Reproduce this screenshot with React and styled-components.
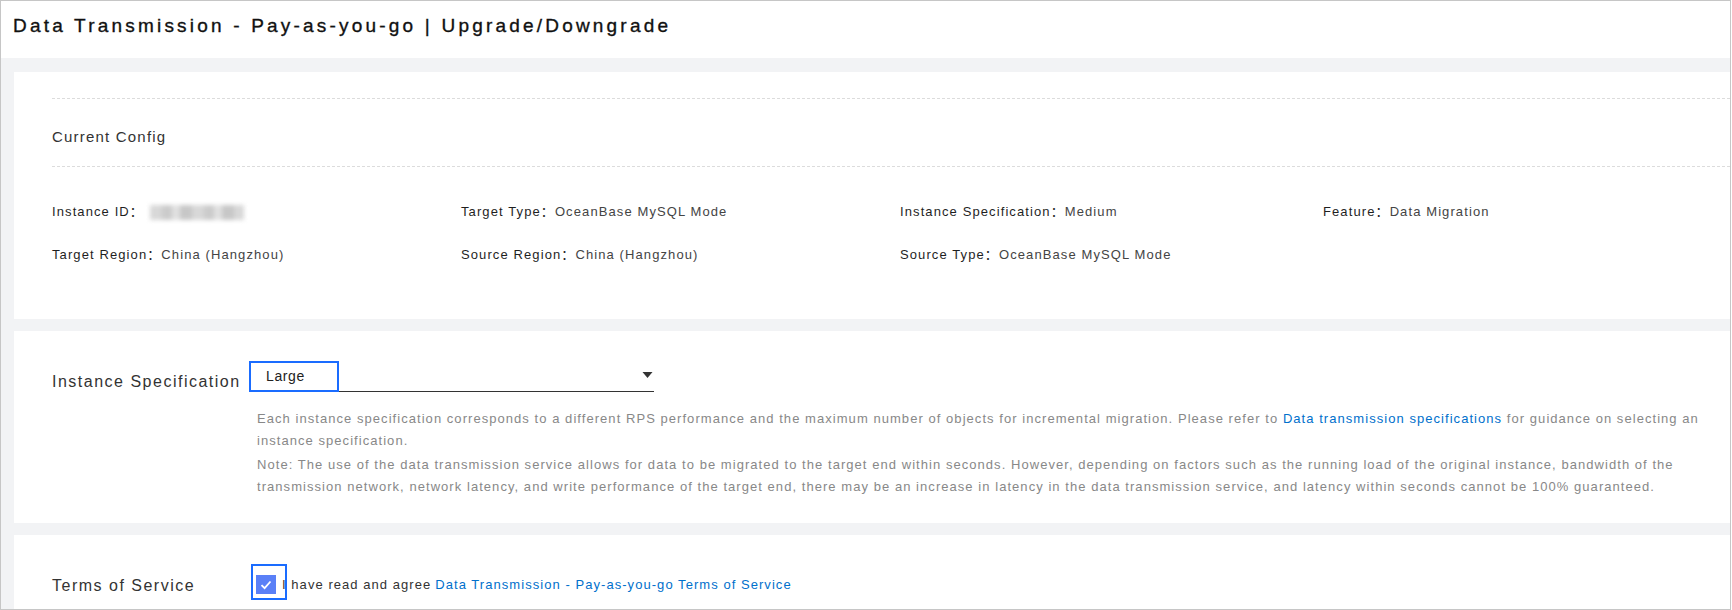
import React from 'react';
import styled, { createGlobalStyle } from 'styled-components';

const GlobalStyle = createGlobalStyle`
  html, body {
    margin: 0;
    padding: 0;
    background: #ffffff;
  }
  body {
    font-family: "Liberation Sans", Arial, "Noto Sans CJK SC", sans-serif;
    color: #333;
  }
`;

const config = [
  { label: 'Instance ID', value: null },
  { label: 'Target Type', value: 'OceanBase MySQL Mode' },
  { label: 'Instance Specification', value: 'Medium' },
  { label: 'Feature', value: 'Data Migration' },
  { label: 'Target Region', value: 'China (Hangzhou)' },
  { label: 'Source Region', value: 'China (Hangzhou)' },
  { label: 'Source Type', value: 'OceanBase MySQL Mode' },
];

const App = () => {
  return (
    <>
      <GlobalStyle />
      <Frame>
        <Header>
          <Title>Data Transmission - Pay-as-you-go | Upgrade/Downgrade</Title>
        </Header>
        <Body>
          <Card $pad="26px 0 54px 38px">
            <ConfigHead>Current Config</ConfigHead>
            <InfoGrid>
              {config.map((item) => (
                <InfoItem key={item.label}>
                  <InfoLabel>{item.label}：</InfoLabel>
                  {item.value ? <InfoValue>{item.value}</InfoValue> : <Blurred />}
                </InfoItem>
              ))}
            </InfoGrid>
          </Card>

          <Card $pad="30px 0 23px 38px">
            <FormRow $align="flex-end">
              <FormLabel>Instance Specification</FormLabel>
              <Select>
                <SelectValue>Large</SelectValue>
                <Caret viewBox="0 0 10 6">
                  <path d="M0 0 L10 0 L5 6 Z" fill="#333" />
                </Caret>
              </Select>
            </FormRow>
            <Help>
              <p>
                Each instance specification corresponds to a different RPS performance and the maximum number of
                objects for incremental migration. Please refer to <Link>Data transmission specifications</Link> for
                guidance on selecting an instance specification.
              </p>
              <p>
                Note: The use of the data transmission service allows for data to be migrated to the target end within
                seconds. However, depending on factors such as the running load of the original instance, bandwidth of
                the transmission network, network latency, and write performance of the target end, there may be an
                increase in latency in the data transmission service, and latency within seconds cannot be 100%
                guaranteed.
              </p>
            </Help>
          </Card>

          <Card $pad="38px 0 40px 38px">
            <FormRow $align="center">
              <FormLabel $shift="3px">Terms of Service</FormLabel>
              <Agree>
                <Checkbox>
                  <svg width="12" height="10" viewBox="0 0 12 10">
                    <path d="M1.5 5.2 L4.6 8.2 L10.5 1.5" fill="none" stroke="#fff" strokeWidth="1.8" />
                  </svg>
                </Checkbox>
                <span>I have read and agree</span>
                <Link>Data Transmission - Pay-as-you-go Terms of Service</Link>
              </Agree>
            </FormRow>
          </Card>
        </Body>
      </Frame>
    </>
  );
};

export default App;

const Frame = styled.div`
  width: 1731px;
  height: 610px;
  box-sizing: border-box;
  border: 1px solid #c6c6c6;
  background: #f2f3f5;
  overflow: hidden;
`;

const Header = styled.div`
  height: 57px;
  background: #fff;
  display: flex;
  align-items: center;
  padding-left: 12px;
  padding-bottom: 7px;
  box-sizing: border-box;
`;

const Title = styled.h1`
  margin: 0;
  font-size: 19px;
  font-weight: normal;
  color: #111;
  letter-spacing: 3.2px;
  -webkit-text-stroke: 0.35px #111;
`;

const Body = styled.div`
  display: flex;
  flex-direction: column;
  gap: 12px;
  padding: 14px 0 0 13px;
`;

const Card = styled.div`
  background: #fff;
  padding: ${(p) => p.$pad};
`;

const ConfigHead = styled.div`
  border-top: 1px dashed #dcdcdc;
  border-bottom: 1px dashed #dcdcdc;
  padding: 28px 0 19px;
  font-size: 15px;
  line-height: 20px;
  letter-spacing: 1.2px;
  color: #333;
`;

const InfoGrid = styled.div`
  display: grid;
  grid-template-columns: 409px 439px 423px 1fr;
  row-gap: 23px;
  margin-top: 35px;
`;

const InfoItem = styled.div`
  display: flex;
  align-items: center;
  font-size: 13px;
  line-height: 20px;
  letter-spacing: 1.1px;
  white-space: nowrap;
`;

const InfoLabel = styled.span`
  color: #1f1f1f;
`;

const InfoValue = styled.span`
  color: #444;
`;

const Blurred = styled.span`
  display: inline-block;
  width: 94px;
  height: 15px;
  margin-left: 6px;
  background: repeating-linear-gradient(
    90deg,
    #d4d4d4 0 12px,
    #c6c6c6 12px 22px,
    #dedede 22px 30px,
    #c2c2c2 30px 42px
  );
  filter: blur(2.2px);
  opacity: 0.9;
`;

const FormRow = styled.div`
  display: flex;
  align-items: ${(p) => p.$align};
`;

const FormLabel = styled.div`
  width: 198px;
  flex-shrink: 0;
  font-size: 16px;
  line-height: 20px;
  letter-spacing: 1.5px;
  white-space: nowrap;
  color: #333;
  margin-top: ${(p) => p.$shift || 0};
`;

const Select = styled.div`
  width: 405px;
  height: 31px;
  display: flex;
  align-items: flex-start;
  border-bottom: 1px solid #333;
  box-sizing: border-box;
  margin-left: -1px;
`;

const SelectValue = styled.div`
  width: 90px;
  height: 31px;
  box-sizing: border-box;
  border: 2px solid #1a6cff;
  padding: 4px 0 0 15px;
  font-size: 14px;
  line-height: 18px;
  letter-spacing: 0.6px;
  color: #222;
  margin-bottom: -1px;
`;

const Caret = styled.svg`
  width: 11px;
  height: 6px;
  margin: 11px 1px 0 auto;
`;

const Help = styled.div`
  margin: 16px 0 0 205px;
  width: 1462px;
  font-size: 13px;
  line-height: 22px;
  letter-spacing: 1.05px;
  color: #888;

  p {
    margin: 0 0 2px;
  }
`;

const Link = styled.span`
  color: #0070cc;
`;

const Agree = styled.div`
  display: flex;
  align-items: center;
  font-size: 13px;
  line-height: 20px;
  letter-spacing: 1.05px;
  color: #333;
  margin-left: 6px;

  ${Link} {
    margin-left: 4px;
  }
`;

const Checkbox = styled.span`
  position: relative;
  width: 20px;
  height: 19px;
  margin-right: 6px;
  background: #5a80f7;
  display: flex;
  align-items: center;
  justify-content: center;

  &::after {
    content: '';
    position: absolute;
    left: -5px;
    top: -11px;
    width: 36px;
    height: 36px;
    box-sizing: border-box;
    border: 2px solid #1a6cff;
  }
`;
